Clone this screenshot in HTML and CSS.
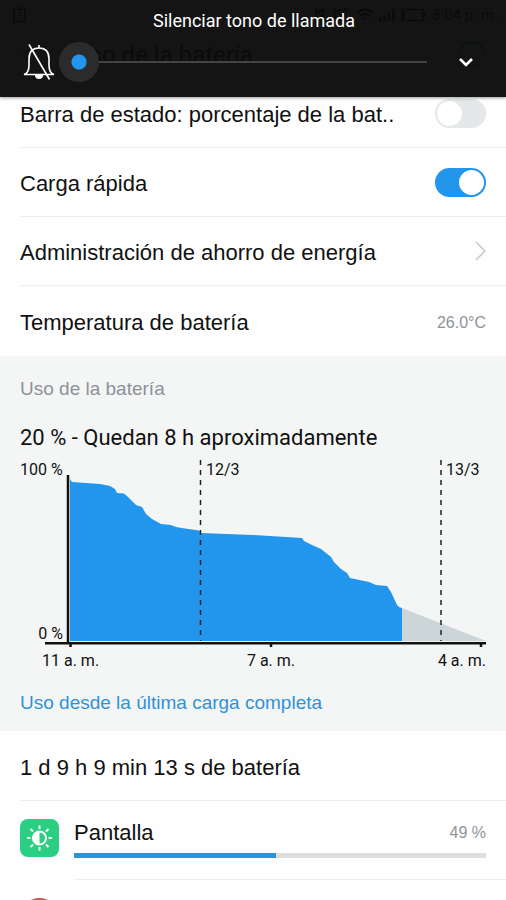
FILE: index.html
```html
<!DOCTYPE html>
<html lang="es">
<head>
<meta charset="utf-8">
<meta name="viewport" content="width=device-width, initial-scale=1">
<title>Uso de la batería</title>
<link rel="stylesheet" href="styles.css">
</head>
<body>
<div class="screen">
  <div class="status">
    <svg class="status-alert" width="14" height="16" viewBox="0 0 14 16" fill="none" stroke="#000" stroke-width="1.6"><path d="M1 2.5h11v12H1zM4.500 1h4M6.500 5v4M6.500 11v1.500"/></svg>
    <div class="status-icons">
      <svg width="112" height="16" viewBox="0 0 112 16" fill="none" stroke="#000" stroke-width="1.600">
        <path d="M1 5h3l4-3v11l-4-3H1zM0 1l11 13"/>
        <circle cx="25" cy="8" r="5"/><path d="M25 5v3h3M18 4l3-3M32 4l-3-3"/>
        <path d="M42 6q8-7 16 0M45 9q5-4 10 0M48 12q2-2 4 0" stroke-width="2"/>
        <path d="M65 14v-3M69.500 14V8.500M74 14V5.500M78.500 14V2" stroke-width="2.500"/>
        <path d="M87 2.500h21v11H87zM110 6v4"/><path d="M89 4v8" stroke="#700" stroke-width="2"/>
      </svg>
      <span>8:04 p. m.</span>
    </div>
  </div>
  <header class="titlebar">
    <svg width="14" height="20" viewBox="0 0 14 20" fill="none" stroke="#2196ec" stroke-width="2"><path d="M10 3L3 10l7 7"/></svg>
    <h1>Uso de la batería</h1>
    <svg width="28" height="28" viewBox="0 0 28 28" fill="none" stroke="#2196ec" stroke-width="2"><path d="M26 12A12 12 0 1 0 22 22"/></svg>
  </header>
  <main>
    <section class="rows">
      <label class="row" for="percent"><span>Barra de estado: porcentaje de la bat..</span><input class="switch" type="checkbox" role="switch" id="percent"></label>
      <label class="row" for="fast"><span>Carga rápida</span><input class="switch" type="checkbox" role="switch" id="fast" checked></label>
      <a class="row" href="#ahorro"><span>Administración de ahorro de energía</span><svg width="11" height="20" viewBox="0 0 11 20" fill="none" stroke="#c4c7c9" stroke-width="1.500"><path d="M1 1l9 9-9 9"/></svg></a>
      <div class="row"><span>Temperatura de batería</span><span class="value">26.0°C</span></div>
    </section>
    <section class="usage">
      <h2>Uso de la batería</h2>
      <div class="summary">
        <p class="estimate">20 % - Quedan 8 h aproximadamente</p>
        <svg class="chart" viewBox="0 0 466 217" role="img" aria-label="Nivel de batería">
          <path fill="#2196ec" d="M50 189V27L52 30 80 32 90 34 95 37 97 41 104 41.500 108 45 116 53 122 55 126 62 132 67 141 72 151 73 156 75 165 76.500 179 78.500 181 81 233 83 282 86 284 89 292 93 301 97 311 105 314 110 321 117 327 121 330 126 349 130 356 133 367 134 371 140 377 153 379 155 382 156V189z"/>
          <path fill="#ccd5d8" d="M382 156L466 189H382z"/>
          <path class="midnight" d="M180.500 8V189M421 8V189"/>
          <path fill="none" stroke="#111" stroke-width="2.500" d="M48 23V192"/>
          <path fill="none" stroke="#111" stroke-width="2.500" d="M25 191.200H466M50.500 191v4M251 191v4M461 191v4"/>
          <text x="0" y="23">100 %</text>
          <text x="43" y="187" text-anchor="end">0 %</text>
          <text x="186" y="23">12/3</text>
          <text x="426" y="23">13/3</text>
          <text x="22" y="214">11 a. m.</text>
          <text x="251" y="214" text-anchor="middle">7 a. m.</text>
          <text x="466" y="214" text-anchor="end">4 a. m.</text>
        </svg>
      </div>
      <a class="since" href="#historial">Uso desde la última carga completa</a>
    </section>
    <section class="apps">
      <div class="row"><span>1 d 9 h 9 min 13 s de batería</span></div>
      <div class="app">
        <svg width="40" height="40" viewBox="0 0 40 40"><rect y="1" width="39" height="38" rx="8" fill="#2acf82"/><g fill="none" stroke="#fff" stroke-width="2"><circle cx="19.500" cy="20" r="6.500"/><path d="M19.500 11V7.500M19.500 29v3.500M10.500 20H7M28.500 20H32M13 13.500L10.500 11M26 13.500l2.500-2.500M13 26.500L10.500 29M26 26.500l2.500 2.500"/></g><path fill="#fff" d="M19.500 13.500a6.500 6.500 0 0 0 0 13z"/></svg>
        <div class="app-body">
          <div class="app-line"><span>Pantalla</span><span class="value">49 %</span></div>
          <div class="bar"><div class="fill" style="width:49%"></div></div>
        </div>
      </div>
      <div class="app">
        <svg width="40" height="40" viewBox="0 0 40 40"><circle cx="19.500" cy="20" r="19" fill="#d9534a"/></svg>
        <div class="app-body"></div>
      </div>
    </section>
  </main>
  <div class="volume">
    <label for="vol">Silenciar tono de llamada</label>
    <div class="volume-line">
      <svg width="34" height="36" viewBox="0 0 34 36" fill="none" stroke="#fff" stroke-width="1.600"><path d="M2 30.500Q7 29 7 21V15Q7 4 17 4T27 15v6q0 8 5 9.500zM17 4V1"/><path d="M13 31a4 4 0 0 0 8 0z" fill="#fff" stroke="none"/><path d="M7 0.500l20.500 35"/></svg>
      <input type="range" id="vol" min="0" max="7" value="0">
      <button type="button" aria-label="Expandir"><svg width="14" height="10" viewBox="0 0 14 10" fill="none" stroke="#fff" stroke-width="2.600"><path d="M1 2l6 6 6-6"/></svg></button>
    </div>
  </div>
</div>
</body>
</html>
```
FILE: styles.css
```css
* { box-sizing: border-box; }
body { margin: 0; background: #fefefe; color: #111; font-family: "Liberation Sans", Arial, sans-serif; font-size: 22px; }
h1, h2, p { margin: 0; font-weight: 400; }
a { color: inherit; text-decoration: none; }
svg { flex: none; display: block; }
.screen { position: relative; height: 100vh; overflow: hidden; }
.status { display: flex; justify-content: space-between; align-items: center; height: 30px; padding: 0 8px 0 13px; font-family: Roboto, sans-serif; font-size: 15px; }
.status-icons { display: flex; align-items: center; gap: 5px; }
.titlebar { display: flex; align-items: center; height: 49px; padding: 0 20px; gap: 40px; font-family: Roboto, sans-serif; }
.titlebar h1 { flex: 1; font-size: 24px; }
.row { display: flex; align-items: center; justify-content: space-between; height: 69px; margin-left: 20px; padding-right: 20px; border-bottom: 1px solid #efefef; }
.row > span { padding-top: 4px; }
.rows .row:last-child { height: 70px; border-bottom: 0; }
.value { color: #8f939b; font-size: 16px; }
.switch { appearance: none; width: 51px; height: 29px; margin: 0; padding: 2px; border-radius: 15px; background: #e4e8e8; }
.switch::before { content: ""; display: block; width: 25px; height: 25px; border-radius: 50%; background: #fff; }
.switch:checked { background: #2196ec; }
.switch:checked::before { margin-left: auto; }
.usage { background: #f4f6f6; }
.usage h2 { height: 54px; padding: 21px 20px 0; border-bottom: 1px solid #f8f9f9; color: #8f9198; font-size: 19px; line-height: 24px; }
.summary { padding: 14px 20px 0; }
.estimate { font-family: Roboto, sans-serif; font-size: 22px; line-height: 28px; }
.chart { width: 100%; height: auto; overflow: visible; font-family: Roboto, sans-serif; font-size: 16px; fill: #111; }
.midnight { fill: none; stroke: #222; stroke-width: 1.5; stroke-dasharray: 5 5; }
.since { display: block; padding: 22px 20px 16px; color: #3191d8; font-size: 19px; line-height: 24px; }
.apps .row { height: 70px; }
.app { display: flex; gap: 14px; padding-left: 20px; }
.apps > .app { padding-top: 17px; }
.app-body { flex: 1; height: 62px; padding-right: 20px; border-bottom: 1px solid #efefef; }
.app-line { display: flex; align-items: center; justify-content: space-between; height: 30px; }
.bar { height: 5px; margin-top: 5px; background: #dedede; }
.fill { height: 100%; background: #2b92dc; }
.volume { position: absolute; inset: 0 0 auto; height: 97px; padding: 9px 20px 0 22px; background: rgba(10, 10, 10, .96); box-shadow: 0 1px 3px rgba(0, 0, 0, .4); color: #fff; font-family: Roboto, sans-serif; }
.volume label { display: block; font-size: 18px; line-height: 24px; text-align: center; }
.volume-line { display: flex; align-items: center; height: 58px; }
.volume input { appearance: none; flex: 1; height: 40px; margin: 0 19px 0 3px; background: linear-gradient(#444, #444) 20px center / calc(100% - 20px) 2px no-repeat; }
.volume input::-webkit-slider-thumb { appearance: none; width: 40px; height: 40px; border-radius: 50%; background: radial-gradient(circle, #2196ec 7px, #2b2b2b 8px); }
.volume button { width: 40px; height: 40px; padding: 0; border: 0; background: none; display: grid; place-items: center; }
```
